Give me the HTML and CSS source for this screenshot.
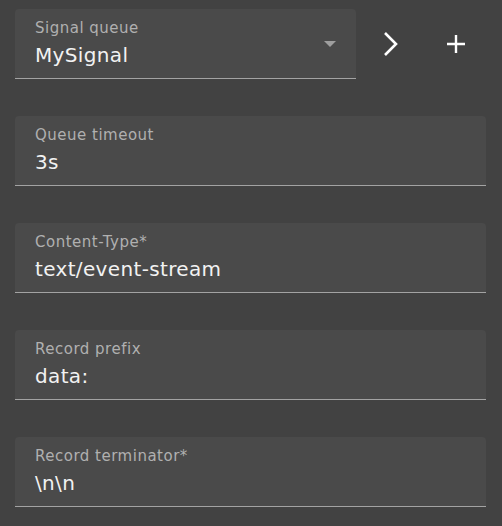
FILE: index.html
```html
<!DOCTYPE html>
<html>
<head>
<meta charset="utf-8">
<link rel="stylesheet" href="styles.css">
</head>
<body>
<div class="form">
  <div class="row">
    <div class="field select">
      <div class="label">Signal queue</div>
      <div class="value">MySignal</div>
      <svg class="caret" width="12" height="6" viewBox="0 0 12 6"><path d="M0 0H12L6 6Z" fill="#9e9e9e"/></svg>
    </div>
    <button class="icon-btn next" aria-label="open">
      <svg width="18" height="26" viewBox="0 0 18 26"><path d="M3 2 L14 13 L3 24" fill="none" stroke="#fff" stroke-width="2.6"/></svg>
    </button>
    <button class="icon-btn add" aria-label="add">
      <svg width="20" height="20" viewBox="0 0 20 20"><path d="M10 1V19M1 10H19" fill="none" stroke="#fff" stroke-width="2.4"/></svg>
    </button>
  </div>
  <div class="field">
    <div class="label">Queue timeout</div>
    <div class="value">3s</div>
  </div>
  <div class="field">
    <div class="label">Content-Type*</div>
    <div class="value">text/event-stream</div>
  </div>
  <div class="field">
    <div class="label">Record prefix</div>
    <div class="value">data:</div>
  </div>
  <div class="field">
    <div class="label">Record terminator*</div>
    <div class="value">\n\n</div>
  </div>
</div>
</body>
</html>
```
FILE: styles.css
```css
html, body {
  margin: 0;
  padding: 0;
  background: #424242;
  width: 502px;
  height: 526px;
  overflow: hidden;
}
body {
  font-family: "DejaVu Sans", sans-serif;
}
.form {
  display: flex;
  flex-direction: column;
  gap: 37px;
  padding: 9px 16px 0 15px;
}
.row {
  display: flex;
  align-items: center;
}
.field {
  position: relative;
  box-sizing: border-box;
  height: 70px;
  background: #4a4a4a;
  border-radius: 4px 4px 0 0;
  border-bottom: 1px solid #a3a3a3;
  padding: 10px 20px 0 20px;
}
.select {
  width: 341px;
  flex: none;
}
.label {
  font-size: 15px;
  line-height: 18px;
  letter-spacing: 0.5px;
  color: #b0b0b0;
}
.value {
  margin-top: 3px;
  font-size: 20px;
  line-height: 30px;
  letter-spacing: 0.35px;
  color: #f2f2f2;
}
.caret {
  position: absolute;
  right: 20px;
  top: 32px;
}
.icon-btn {
  background: none;
  border: 0;
  padding: 0;
  height: 70px;
  display: flex;
  align-items: center;
  justify-content: center;
  flex: none;
}
.next { width: 69px; }
.add { width: 62px; }
```
